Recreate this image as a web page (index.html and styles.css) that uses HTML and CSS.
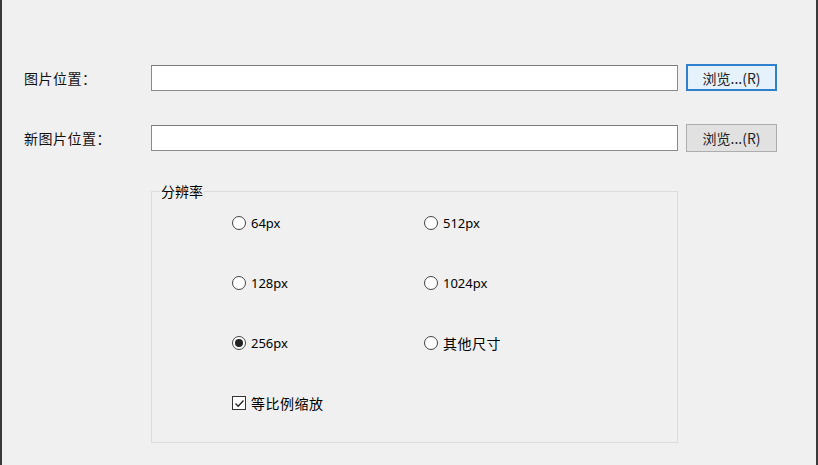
FILE: index.html
```html
<!DOCTYPE html>
<html lang="zh-CN">
<head>
<meta charset="utf-8">
<title>图片位置</title>
<link rel="stylesheet" href="styles.css">
</head>
<body>
<div class="window">
  <div class="form-row first">
    <label class="field-label">图片位置：</label>
    <input class="path-input" type="text">
    <button class="browse focused">浏览...(R)</button>
  </div>
  <div class="form-row second">
    <label class="field-label">新图片位置：</label>
    <input class="path-input" type="text">
    <button class="browse">浏览...(R)</button>
  </div>
  <fieldset class="group">
    <legend class="group-title">分辨率</legend>
    <div class="options">
      <div class="opt"><span class="radio"></span><span class="opt-text">64px</span></div>
      <div class="opt"><span class="radio"></span><span class="opt-text">512px</span></div>
      <div class="opt"><span class="radio"></span><span class="opt-text">128px</span></div>
      <div class="opt"><span class="radio"></span><span class="opt-text">1024px</span></div>
      <div class="opt"><span class="radio checked"></span><span class="opt-text">256px</span></div>
      <div class="opt"><span class="radio"></span><span class="opt-text cjk">其他尺寸</span></div>
      <div class="opt"><span class="checkbox"><svg viewBox="0 0 13 13" width="13" height="13"><path d="M2.5 6.5 L5.2 9.2 L10.5 3.5" fill="none" stroke="#222" stroke-width="1.3"/></svg></span><span class="opt-text cjk">等比例缩放</span></div>
    </div>
  </fieldset>
</div>
</body>
</html>
```

FILE: styles.css
```css
* { box-sizing: border-box; }
html, body { margin: 0; padding: 0; }
body {
  background: #f0f0f0;
  font-family: "Noto Sans CJK SC", "Noto Sans", sans-serif;
  font-size: 14px;
  color: #000;
}
.window {
  width: 818px;
  height: 465px;
  border-left: 2px solid #3a3a3a;
  border-right: 2px solid #3a3a3a;
  padding-top: 64px;
  padding-left: 22px;
}
.form-row {
  display: flex;
  align-items: center;
  height: 27px;
}
.form-row.second {
  margin-top: 33px;
  height: 28px;
}
.field-label {
  width: 127px;
  font-size: 14px;
  line-height: 20px;
  letter-spacing: 0.5px;
  color: #111;
}
.path-input {
  width: 527px;
  height: 26px;
  margin: 0;
  border: 1px solid #8a8a8a;
  border-top-color: #7a7a7a;
  background: #fff;
  outline: none;
}
.browse {
  margin-left: 8px;
  width: 91px;
  height: 100%;
  padding: 0;
  background: #e1e1e1;
  border: 1px solid #adadad;
  font-family: "Noto Sans CJK SC", "Noto Sans", sans-serif;
  font-size: 14px;
  color: #222;
}
.browse.focused {
  background: #e5f1fb;
  border: 2px solid #2f7fcf;
}
.group {
  margin: 30px 0 0 127px;
  width: 527px;
  height: 261px;
  padding: 0;
  border: 1px solid #dcdcdc;
}
.group-title {
  margin-left: 8px;
  padding: 0 1px;
  font-size: 14px;
  line-height: 18px;
}
.options {
  display: grid;
  grid-template-columns: 192px 192px;
  grid-auto-rows: 20px;
  row-gap: 40px;
  padding: 13px 0 0 80px;
}
.opt {
  display: flex;
  align-items: center;
}
.radio, .checkbox {
  width: 14px;
  height: 14px;
  flex: none;
  border: 1px solid #444;
  background: #fff;
  display: flex;
  align-items: center;
  justify-content: center;
}
.radio { border-radius: 50%; }
.radio.checked::after {
  content: "";
  width: 8px;
  height: 8px;
  border-radius: 50%;
  background: #222;
}
.checkbox { border-color: #333; }
.checkbox svg { display: block; flex: none; }
.opt-text {
  margin-left: 5px;
  font-family: "Noto Sans", "Noto Sans CJK SC", sans-serif;
  font-size: 13px;
  line-height: 20px;
}
.opt-text.cjk {
  font-family: "Noto Sans CJK SC", sans-serif;
  font-size: 14px;
  letter-spacing: 0.5px;
}
```
